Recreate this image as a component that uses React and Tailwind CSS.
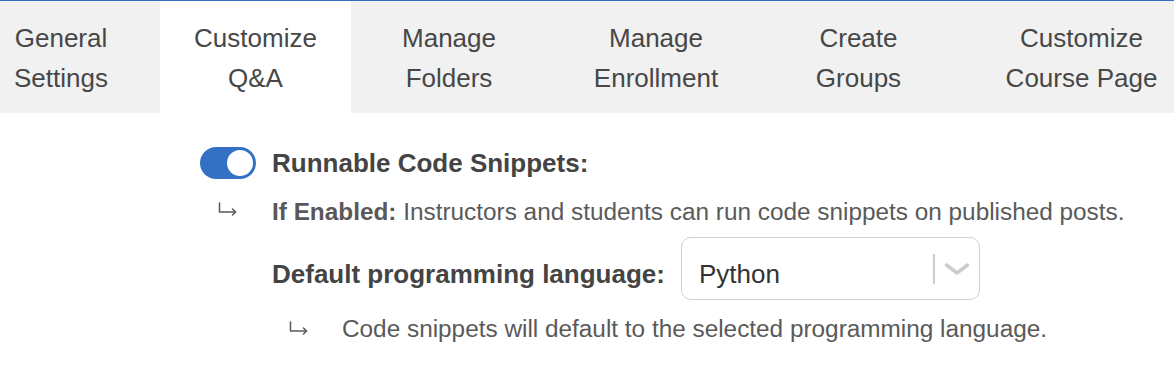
import React from "react";

function Arrow() {
  return (
    <svg width="19" height="14" viewBox="0 0 19 14" fill="none" stroke="#5a5a5a" strokeWidth="1.5" strokeLinecap="round" strokeLinejoin="round">
      <path d="M1.5 1 V10 H17.5" />
      <path d="M14.5 7 L17.5 10 L14.5 13" />
    </svg>
  );
}

const tabs = [
  { l1: "General", l2: "Settings", w: "w-[160px] pr-[38px]", active: false },
  { l1: "Customize", l2: "Q&A", w: "w-[191px]", active: true },
  { l1: "Manage", l2: "Folders", w: "w-[196px]", active: false },
  { l1: "Manage", l2: "Enrollment", w: "w-[218px]", active: false },
  { l1: "Create", l2: "Groups", w: "w-[187px]", active: false },
  { l1: "Customize", l2: "Course Page", w: "w-[259px]", active: false },
];

export default function App() {
  return (
    <div
      className="w-[1174px] h-[366px] overflow-hidden bg-white text-[#444]"
      style={{ fontFamily: '"Liberation Sans", Arial, sans-serif' }}
    >
      <div className="h-[1px] bg-[#2f6fc5]" />
      <div className="flex bg-[#f1f1f1] h-[112px] overflow-hidden">
        {tabs.map((t, i) => (
          <div
            key={i}
            className={`${t.w} shrink-0 flex flex-col items-center justify-center pt-[2px] text-center text-[26px] leading-[40px] text-[#474747] ${
              t.active ? "bg-white" : "bg-[#f1f1f1]"
            }`}
          >
            <div className="whitespace-nowrap">{t.l1}</div>
            <div className="whitespace-nowrap">{t.l2}</div>
          </div>
        ))}
      </div>

      <div className="pl-[200px] pt-[30px]">
        <div className="flex items-center h-[40px]">
          <div className="w-[56px] h-[32px] rounded-full bg-[#3471c5] flex items-center justify-end pr-[3px]">
            <div className="w-[26px] h-[26px] rounded-full bg-white" />
          </div>
          <div className="ml-[16px] text-[26px] leading-[40px] font-bold text-[#444] whitespace-nowrap">
            Runnable Code Snippets:
          </div>
        </div>

        <div className="flex items-start mt-[9px]">
          <div className="w-[72px] pl-[18px] pt-[10px] shrink-0">
            <Arrow />
          </div>
          <div className="text-[24.35px] leading-[40px] text-[#5a5a5a] whitespace-nowrap">
            <span className="font-bold text-[#585858]">If Enabled:</span> Instructors and students can run code snippets on published posts.
          </div>
        </div>

        <div className="pl-[72px]">
          <div className="flex items-start mt-[5px]">
            <div className="mt-[17px] text-[26px] leading-[40px] font-bold text-[#444] whitespace-nowrap">
              Default programming language:
            </div>
            <div className="ml-[16px] w-[299px] h-[63px] border border-[#cfcfcf] rounded-[10px] flex items-center bg-white">
              <div className="flex-1 pl-[17px] mt-[11px] text-[26px] leading-[40px] text-[#333]">Python</div>
              <div className="w-[2px] h-[30px] bg-[#cccccc]" />
              <div className="w-[44px] flex items-center justify-center">
                <svg width="26" height="12" viewBox="0 0 26 12" fill="none" stroke="#cccccc" strokeWidth="3.5" strokeLinecap="round" strokeLinejoin="round">
                  <path d="M2.5 2 L13 10 L23.5 2" />
                </svg>
              </div>
            </div>
          </div>

          <div className="flex items-start mt-[9px]">
            <div className="w-[70px] pl-[17px] pt-[12px] shrink-0">
              <Arrow />
            </div>
            <div className="text-[24.35px] leading-[40px] text-[#5a5a5a] whitespace-nowrap">
              Code snippets will default to the selected programming language.
            </div>
          </div>
        </div>
      </div>
    </div>
  );
}
